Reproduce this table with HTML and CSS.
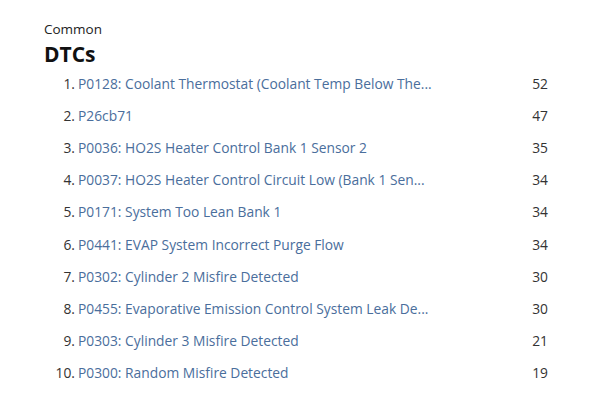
FILE: index.html
```html
<!DOCTYPE html>
<html>
<head>
<meta charset="utf-8">
<link rel="stylesheet" href="styles.css">
</head>
<body>
<div class="card">
  <div class="kicker">Common</div>
  <h1 class="title">DTCs</h1>
  <ol class="list">
    <li class="row"><span class="num">1.</span><a class="link">P0128: Coolant Thermostat (Coolant Temp Below The...</a><span class="count">52</span></li>
    <li class="row"><span class="num">2.</span><a class="link">P26cb71</a><span class="count">47</span></li>
    <li class="row"><span class="num">3.</span><a class="link">P0036: HO2S Heater Control Bank 1 Sensor 2</a><span class="count">35</span></li>
    <li class="row"><span class="num">4.</span><a class="link">P0037: HO2S Heater Control Circuit Low (Bank 1 Sen...</a><span class="count">34</span></li>
    <li class="row"><span class="num">5.</span><a class="link">P0171: System Too Lean Bank 1</a><span class="count">34</span></li>
    <li class="row"><span class="num">6.</span><a class="link">P0441: EVAP System Incorrect Purge Flow</a><span class="count">34</span></li>
    <li class="row"><span class="num">7.</span><a class="link">P0302: Cylinder 2 Misfire Detected</a><span class="count">30</span></li>
    <li class="row"><span class="num">8.</span><a class="link">P0455: Evaporative Emission Control System Leak De...</a><span class="count">30</span></li>
    <li class="row"><span class="num">9.</span><a class="link">P0303: Cylinder 3 Misfire Detected</a><span class="count">21</span></li>
    <li class="row"><span class="num">10.</span><a class="link">P0300: Random Misfire Detected</a><span class="count">19</span></li>
  </ol>
</div>
</body>
</html>
```
FILE: styles.css
```css
html, body {
  margin: 0;
  padding: 0;
  background: #ffffff;
}
body {
  font-family: "Open Sans", "DejaVu Sans", sans-serif;
  color: #222;
}
.card {
  padding: 20px 46px 0 44px;
}
.kicker {
  font-size: 13.5px;
  line-height: 19px;
  color: #222;
}
.title {
  margin: 2px 0 0 0;
  font-size: 21px;
  line-height: 26px;
  font-weight: 700;
  color: #111;
}
.list {
  list-style: none;
  margin: 0;
  padding: 0;
}
.row {
  display: flex;
  align-items: center;
  height: 32.2px;
  font-size: 13.8px;
}
.num {
  width: 31px;
  text-align: right;
  color: #333;
  margin-right: 3px;
}
.link {
  flex: 1;
  color: #4a6e9c;
  white-space: nowrap;
  overflow: hidden;
}
.count {
  color: #333;
  text-align: right;
}
```
